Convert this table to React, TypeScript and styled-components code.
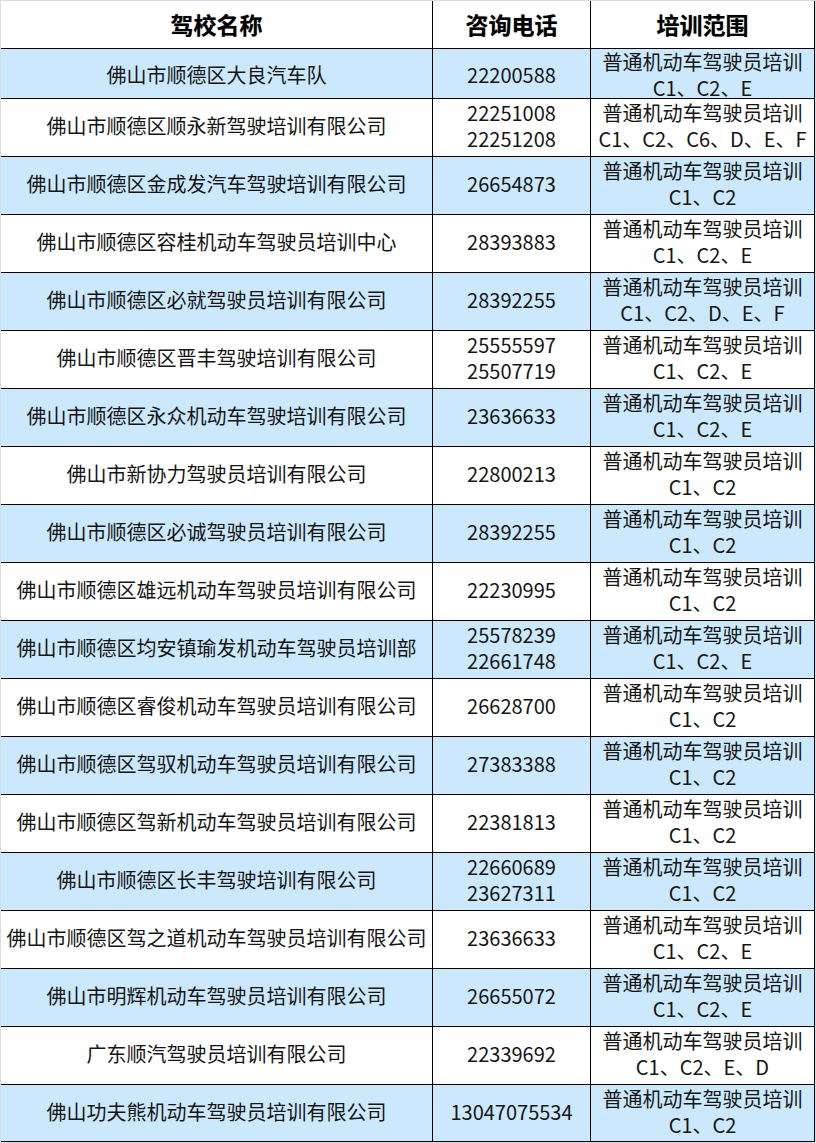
import React from 'react'
import styled, { createGlobalStyle } from 'styled-components'

const GlobalStyle = createGlobalStyle`
  html, body {
    margin: 0;
    padding: 0;
    background: #d5dde8;
  }
  body {
    font-family: "Noto Sans CJK SC", "Noto Sans", sans-serif;
  }
`

const Page = styled.div`
  width: 816px;
  height: 1143px;
  padding: 1px 0 0 1px;
  box-sizing: border-box;
`

const Table = styled.div`
  width: 814px;
  display: flex;
  flex-direction: column;
`

const Row = styled.div<{ $height: number; $shaded?: boolean }>`
  display: grid;
  grid-template-columns: 432px 158px 224px;
  height: ${(p) => p.$height}px;
  box-sizing: border-box;
  border-bottom: 1px solid #000;
  background: ${(p) => (p.$shaded ? '#cbe8fc' : '#fff')};
`

const Cell = styled.div`
  display: flex;
  flex-direction: column;
  align-items: center;
  justify-content: center;
  box-sizing: border-box;
  padding-bottom: 3px;
  border-right: 1px solid #000;
  font-size: 20px;
  line-height: 26px;
  color: #151515;
  white-space: nowrap;
  overflow: visible;
`

const HeadCell = styled(Cell)`
  padding-bottom: 2px;
  font-size: 23px;
  font-weight: 700;
  color: #000;
  text-shadow: 0 0 1px rgba(0, 0, 0, 0.45);
`

const Line = styled.span`
  display: block;
`

type School = {
  name: string
  phones: string[]
  scope: string
}

const COURSE = '普通机动车驾驶员培训'

const schools: School[] = [
  { name: '佛山市顺德区大良汽车队', phones: ['22200588'], scope: 'C1、C2、E' },
  { name: '佛山市顺德区顺永新驾驶培训有限公司', phones: ['22251008', '22251208'], scope: 'C1、C2、C6、D、E、F' },
  { name: '佛山市顺德区金成发汽车驾驶培训有限公司', phones: ['26654873'], scope: 'C1、C2' },
  { name: '佛山市顺德区容桂机动车驾驶员培训中心', phones: ['28393883'], scope: 'C1、C2、E' },
  { name: '佛山市顺德区必就驾驶员培训有限公司', phones: ['28392255'], scope: 'C1、C2、D、E、F' },
  { name: '佛山市顺德区晋丰驾驶培训有限公司', phones: ['25555597', '25507719'], scope: 'C1、C2、E' },
  { name: '佛山市顺德区永众机动车驾驶培训有限公司', phones: ['23636633'], scope: 'C1、C2、E' },
  { name: '佛山市新协力驾驶员培训有限公司', phones: ['22800213'], scope: 'C1、C2' },
  { name: '佛山市顺德区必诚驾驶员培训有限公司', phones: ['28392255'], scope: 'C1、C2' },
  { name: '佛山市顺德区雄远机动车驾驶员培训有限公司', phones: ['22230995'], scope: 'C1、C2' },
  { name: '佛山市顺德区均安镇瑜发机动车驾驶员培训部', phones: ['25578239', '22661748'], scope: 'C1、C2、E' },
  { name: '佛山市顺德区睿俊机动车驾驶员培训有限公司', phones: ['26628700'], scope: 'C1、C2' },
  { name: '佛山市顺德区驾驭机动车驾驶员培训有限公司', phones: ['27383388'], scope: 'C1、C2' },
  { name: '佛山市顺德区驾新机动车驾驶员培训有限公司', phones: ['22381813'], scope: 'C1、C2' },
  { name: '佛山市顺德区长丰驾驶培训有限公司', phones: ['22660689', '23627311'], scope: 'C1、C2' },
  { name: '佛山市顺德区驾之道机动车驾驶员培训有限公司', phones: ['23636633'], scope: 'C1、C2、E' },
  { name: '佛山市明辉机动车驾驶员培训有限公司', phones: ['26655072'], scope: 'C1、C2、E' },
  { name: '广东顺汽驾驶员培训有限公司', phones: ['22339692'], scope: 'C1、C2、E、D' },
  { name: '佛山功夫熊机动车驾驶员培训有限公司', phones: ['13047075534'], scope: 'C1、C2' },
]

// first and last rows are a little shorter than the rest
const rowHeight = (i: number) => {
  if (i === 0) return 50
  if (i === schools.length - 1) return 57
  return 58
}

const App: React.FC = () => (
  <>
    <GlobalStyle />
    <Page>
      <Table>
        <Row $height={48}>
          <HeadCell>驾校名称</HeadCell>
          <HeadCell>咨询电话</HeadCell>
          <HeadCell>培训范围</HeadCell>
        </Row>
        {schools.map((s, i) => (
          <Row key={s.name} $height={rowHeight(i)} $shaded={i % 2 === 0}>
            <Cell>{s.name}</Cell>
            <Cell>
              {s.phones.map((p) => (
                <Line key={p}>{p}</Line>
              ))}
            </Cell>
            <Cell>
              <Line>{COURSE}</Line>
              <Line>{s.scope}</Line>
            </Cell>
          </Row>
        ))}
      </Table>
    </Page>
  </>
)

export default App
